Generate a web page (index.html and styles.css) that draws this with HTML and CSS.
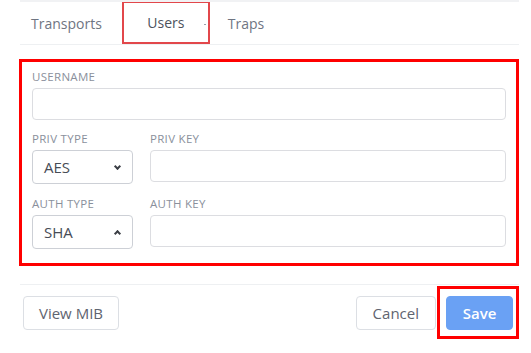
FILE: index.html
```html
<!DOCTYPE html>
<html lang="en">
<head>
  <meta charset="UTF-8">
  <meta name="viewport" content="width=device-width, initial-scale=1.0">
  <title>SNMP Users</title>
  <link rel="stylesheet" href="styles.css">
</head>
<body>

<div class="panel">
  <div class="tabs">
    <span class="tab">Transports</span>
    <span class="tab active">Users</span>
    <span class="tab-dot"></span>
    <span class="tab">Traps</span>
  </div>

  <div class="form-box">
    <label class="field">
      <span class="label">Username</span>
      <input class="input">
    </label>

    <div class="row">
      <label class="field small">
        <span class="label">Priv Type</span>
        <span class="select">AES <span class="chev down"></span></span>
      </label>
      <label class="field grow">
        <span class="label">Priv Key</span>
        <input class="input">
      </label>
    </div>

    <div class="row">
      <label class="field small">
        <span class="label">Auth Type</span>
        <span class="select open">SHA <span class="chev up"></span></span>
      </label>
      <label class="field grow">
        <span class="label">Auth Key</span>
        <input class="input">
      </label>
    </div>
  </div>

  <div class="footer">
    <button class="btn">View MIB</button>
    <div class="spacer"></div>
    <button class="btn">Cancel</button>
    <div class="save-box">
      <button class="btn primary">Save</button>
    </div>
  </div>
</div>

</body>
</html>
```

FILE: styles.css
```css
body {
  font-family: "Open Sans", Arial, sans-serif;
  margin: 0;
  background: #fff;
  color: #4a4f5a;
}
.panel {
  width: 499px;
  margin-left: 20px;
}
.tabs {
  display: flex;
  align-items: center;
  height: 42px;
  border-top: 2px solid #f1f2f4;
  border-bottom: 1px solid #eef0f2;
  font-size: 14px;
}
.tab {
  color: #6f7582;
  padding: 0 11px;
}
.tab.active {
  color: #4d525c;
  box-sizing: border-box;
  height: 42px;
  margin-left: 9px;
  width: 88px;
  display: flex;
  align-items: center;
  justify-content: center;
  border: 2px solid #e2474b;
  border-top-width: 1px;
}
.tab-dot {
  width: 2px;
  height: 1px;
  background: #9aa0aa;
  margin: 2px 0 0 -6px;
}
.tab-dot + .tab {
  margin-left: 11px;
}
.form-box {
  margin-top: 14px;
  margin-left: -1px;
  border: 3px solid #ff0000;
  padding: 8px 10px 14px 10px;
}
.field {
  display: block;
}
.label {
  display: block;
  font-size: 11.5px;
  line-height: 13px;
  text-transform: uppercase;
  color: #8a909c;
  margin-bottom: 5px;
  letter-spacing: 0.3px;
}
.input {
  display: block;
  width: 100%;
  box-sizing: border-box;
  height: 32px;
  border: 1px solid #dcdde1;
  border-radius: 4px;
  background: #fff;
}
.row {
  display: flex;
  align-items: flex-start;
  gap: 17px;
  margin-top: 12px;
}
.row + .row {
  margin-top: 13px;
}
.small {
  width: 101px;
}
.grow {
  flex: 1;
}
.select {
  display: flex;
  align-items: center;
  justify-content: space-between;
  box-sizing: border-box;
  height: 34px;
  border: 1px solid #cdd0d6;
  border-radius: 4px;
  padding: 0 12px 0 11px;
  font-size: 15px;
  color: #474c56;
}
.chev {
  width: 3px;
  height: 3px;
  border-right: 2px solid #3c3f46;
  border-bottom: 2px solid #3c3f46;
}
.chev.down {
  transform: rotate(45deg);
  margin-top: -2px;
}
.chev.up {
  transform: rotate(-135deg);
  margin-top: 3px;
}
.footer {
  display: flex;
  align-items: center;
  margin-top: 18px;
  border-top: 1px solid #eef0f2;
  padding-top: 1px;
}
.spacer {
  flex: 1;
}
.btn {
  font-family: inherit;
  font-size: 15px;
  height: 34px;
  padding: 0 16px;
  border: 1px solid #dcdfe4;
  border-radius: 4px;
  background: #fff;
  color: #5f6470;
  white-space: nowrap;
}
.footer > .btn:first-child {
  margin-left: 3px;
  width: 96px;
  padding: 0;
}
.save-box {
  border: 3px solid #ff0000;
  padding: 7px 3px 6px 6px;
  margin-left: 1px;
}
.btn.primary {
  background: #6aa1f4;
  border-color: #6aa1f4;
  color: #fff;
  font-weight: 600;
  width: 67px;
  padding: 0;
}
```
